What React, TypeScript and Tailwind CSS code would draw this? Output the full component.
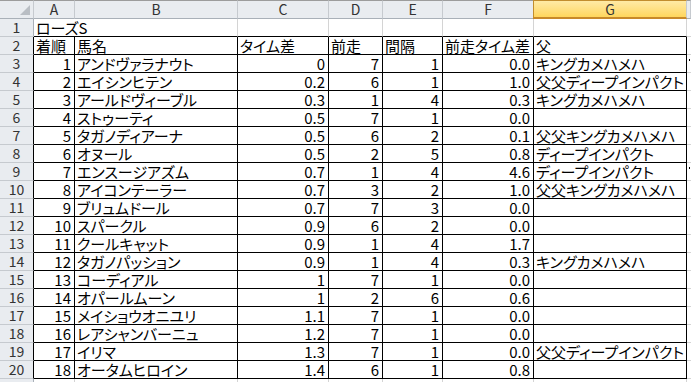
import React from "react";

type Row = [string, string, string, string, string, string, string];

const rows: Row[] = [
  ["1", "アンドヴァラナウト", "0", "7", "1", "0.0", "キングカメハメハ"],
  ["2", "エイシンヒテン", "0.2", "6", "1", "1.0", "父父ディープインパクト"],
  ["3", "アールドヴィーブル", "0.3", "1", "4", "0.3", "キングカメハメハ"],
  ["4", "ストゥーティ", "0.5", "7", "1", "0.0", ""],
  ["5", "タガノディアーナ", "0.5", "6", "2", "0.1", "父父キングカメハメハ"],
  ["6", "オヌール", "0.5", "2", "5", "0.8", "ディープインパクト"],
  ["7", "エンスージアズム", "0.7", "1", "4", "4.6", "ディープインパクト"],
  ["8", "アイコンテーラー", "0.7", "3", "2", "1.0", "父父キングカメハメハ"],
  ["9", "ブリュムドール", "0.7", "7", "3", "0.0", ""],
  ["10", "スパークル", "0.9", "6", "2", "0.0", ""],
  ["11", "クールキャット", "0.9", "1", "4", "1.7", ""],
  ["12", "タガノパッション", "0.9", "1", "4", "0.3", "キングカメハメハ"],
  ["13", "コーディアル", "1", "7", "1", "0.0", ""],
  ["14", "オパールムーン", "1", "2", "6", "0.6", ""],
  ["15", "メイショウオニユリ", "1.1", "7", "1", "0.0", ""],
  ["16", "レアシャンバーニュ", "1.2", "7", "1", "0.0", ""],
  ["17", "イリマ", "1.3", "7", "1", "0.0", "父父ディープインパクト"],
  ["18", "オータムヒロイン", "1.4", "6", "1", "0.8", ""],
];

const heads = ["着順", "馬名", "タイム差", "前走", "間隔", "前走タイム差", "父"];
const letters = ["A", "B", "C", "D", "E", "F"];
// columns that hold numbers (right aligned)
const numCol = [true, false, true, true, true, true, false];

const hdr = "bg-[#e9ecf0] text-[#333] text-[14px] flex items-center justify-center border-b border-r border-b-[#a9b0b8] border-r-[#c6cacf]";
const txt = "whitespace-nowrap leading-[17px] pl-[2px] flex items-end";

function RowHead({ n, dark }: { n: number; dark?: boolean }) {
  return (
    <div
      className={`bg-[#e9ecf0] text-[#333] text-[14px] flex items-end justify-center leading-[17px] border-b border-r border-b-[#c6cacf] ${
        dark ? "border-r-black" : "border-r-[#a9b0b8]"
      }`}
    >
      {n}
    </div>
  );
}

export default function App() {
  return (
    <div className="w-[691px] h-[382px] overflow-hidden bg-white font-['Noto_Sans_CJK_JP',sans-serif] [font-feature-settings:'palt'] text-[15px] text-black">
      <div className="grid grid-cols-[34px_41px_163px_91px_54px_60px_91px_153px_1fr] grid-rows-[19px_repeat(21,18px)]">
        {/* column headers */}
        <div className="relative bg-[#e9ecf0] border-t border-t-[#9c9c9c] border-b border-r border-b-[#a9b0b8] border-r-[#c6cacf]">
          <div className="absolute right-[3px] bottom-[3px] w-0 h-0 border-l-[10px] border-l-transparent border-b-[10px] border-b-[#b9bec4]" />
        </div>
        {letters.map((l) => (
          <div key={l} className={`${hdr} border-t border-t-[#9c9c9c]`}>
            {l}
          </div>
        ))}
        <div className="bg-gradient-to-b from-[#ffeaa5] to-[#ffd65c] text-[#333] text-[14px] flex items-center justify-center border-t border-t-[#c28d2e] border-b-2 border-b-[#c8892a] border-l border-l-[#c28d2e] -ml-[1px] border-r border-r-[#c6cacf]">
          G
        </div>
        <div className={`${hdr} border-t border-t-[#9c9c9c]`} />

        {/* row 1 */}
        <RowHead n={1} />
        <div className={`${txt} col-span-2 border-r border-b border-r-[#d4d4d4] border-b-black`}>ローズS</div>
        {[0, 1, 2, 3, 4].map((i) => (
          <div key={i} className="border-r border-b border-r-[#d4d4d4] border-b-black" />
        ))}
        <div className="border-b border-b-[#d4d4d4]" />

        {/* row 2 */}
        <RowHead n={2} dark />
        {heads.map((h) => (
          <div key={h} className={`${txt} border-r border-b border-black`}>
            {h}
          </div>
        ))}
        <div className="border-b border-b-[#d4d4d4]" />

        {rows.map((r, ri) => (
          <React.Fragment key={ri}>
            <RowHead n={ri + 3} dark />
            {r.map((v, ci) => (
              <div
                key={ci}
                className={`${txt} border-r border-b border-black ${numCol[ci] ? "justify-end pr-[3px]" : ""}`}
              >
                {v}
              </div>
            ))}
            <div className="border-b border-b-[#d4d4d4] flex">
              {(ri === 0 || ri === 6) && <span className="w-[1px] h-[2px] bg-black mt-[4px] ml-[2px]" />}
            </div>
          </React.Fragment>
        ))}

        {/* row 21 */}
        <RowHead n={21} />
        {[0, 1, 2, 3, 4, 5, 6].map((i) => (
          <div key={i} className="border-r border-b border-[#d4d4d4]" />
        ))}
        <div className="border-b border-b-[#d4d4d4]" />
      </div>
    </div>
  );
}
